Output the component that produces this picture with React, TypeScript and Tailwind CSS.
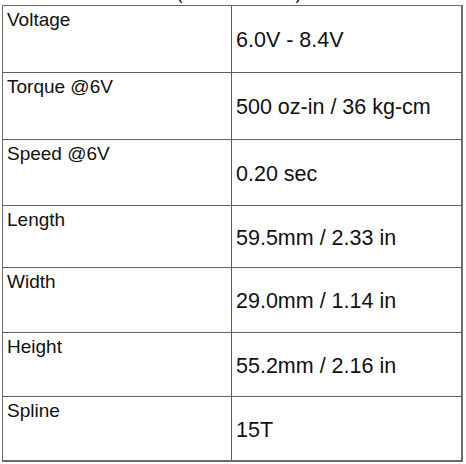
const specs = [
  { label: 'Voltage', value: '6.0V - 8.4V', h: 'h-[67px]' },
  { label: 'Torque @6V', value: '500 oz-in / 36 kg-cm', h: 'h-[67px]' },
  { label: 'Speed @6V', value: '0.20 sec', h: 'h-[66px]' },
  { label: 'Length', value: '59.5mm / 2.33 in', h: 'h-[62px]' },
  { label: 'Width', value: '29.0mm / 1.14 in', h: 'h-[65px]' },
  { label: 'Height', value: '55.2mm / 2.16 in', h: 'h-[64px]' },
  { label: 'Spline', value: '15T', h: 'h-[63px]' },
];

export default function App() {
  return (
    <div className="w-[466px] h-[464px] bg-white overflow-hidden text-[#111] font-['Liberation_Sans',Arial,sans-serif]">
      {/* caption, cropped at the top edge */}
      <div className="h-[5px] overflow-hidden">
        <p className="-mt-[17px] w-[466px] text-center text-[18px] leading-[20px] pl-[12px]">
          (Standard Size)
        </p>
      </div>

      <div className="ml-[2px] w-[461px] border-l border-t border-r-2 border-b-2 border-[#6a6a6a]">
        {specs.map((row, i) => (
          <div
            key={row.label}
            className={`grid grid-cols-[229px_1fr] ${row.h} ${i < specs.length - 1 ? 'border-b border-[#5e5e5e]' : ''}`}
          >
            <div className="border-r border-[#5e5e5e] pl-[4px] pt-[3px] text-[19px] leading-[22px]">
              {row.label}
            </div>
            <div className="flex items-center pl-[4px] pt-[2px] text-[21.5px] leading-[24px]">
              {row.value}
            </div>
          </div>
        ))}
      </div>
    </div>
  );
}
